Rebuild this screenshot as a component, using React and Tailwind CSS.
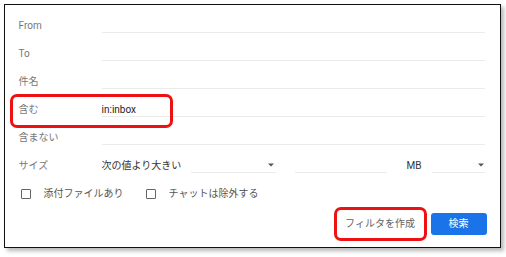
import React from "react";

const font = { fontFamily: 'Roboto, "Noto Sans CJK JP", "Noto Sans", sans-serif' };

function Arrow() {
  return (
    <svg width="6" height="4" viewBox="0 0 6 4" className="shrink-0">
      <path d="M0 0.5 L6 0.5 L3 3.5 Z" fill="#555" />
    </svg>
  );
}

function TextRow({ label, value, children }) {
  return (
    <div className="relative flex h-[28px] items-center">
      <div className="w-[83px] text-[10px] text-[#777]">{label}</div>
      <div className="flex h-[14px] flex-1 items-center border-b border-[#ebebeb] text-[10px] text-[#222]">
        {value}
      </div>
      {children}
    </div>
  );
}

function Checkbox({ label }) {
  return (
    <div className="flex items-center">
      <div className="h-[10px] w-[10px] rounded-[1px] border-[1.5px] border-[#666]" />
      <span className="ml-[13px] text-[10px] text-[#555]">{label}</span>
    </div>
  );
}

export default function App() {
  return (
    <div className="h-[257px] w-[506px] bg-white pl-[4px] pt-[4px]" style={font}>
      <div className="box-border h-[244px] w-[497px] border-[1.5px] border-[#111] bg-white pl-[13.5px] pr-[15.5px] pt-[6.5px] shadow-[3px_3px_4px_rgba(0,0,0,0.28)]">
        <TextRow label="From" />
        <TextRow label="To" />
        <TextRow label="件名" />
        <TextRow label="含む" value="in:inbox">
          <div className="pointer-events-none absolute left-[-9px] top-[-2px] h-[34px] w-[163px] rounded-[7px] border-[3px] border-[#ee1111]" />
        </TextRow>
        <TextRow label="含まない" />
        <div className="flex h-[28px] items-center">
          <div className="w-[83px] text-[10px] text-[#777]">サイズ</div>
          <div className="flex w-[174px] items-center">
            <span className="text-[10px] text-[#333]">次の値より大きい</span>
            <div className="ml-[10px] flex h-[14px] flex-1 items-center justify-end border-b border-[#ebebeb] pr-[2px]">
              <Arrow />
            </div>
          </div>
          <div className="ml-[19px] h-[14px] w-[92px] border-b border-[#ebebeb]" />
          <span className="ml-[20px] text-[10px] text-[#333]">MB</span>
          <div className="ml-[11px] flex h-[14px] flex-1 items-center justify-end border-b border-[#ebebeb] pr-[1px]">
            <Arrow />
          </div>
        </div>
        <div className="flex h-[28px] items-center pl-[2px]">
          <Checkbox label="添付ファイルあり" />
          <div className="ml-[22px]">
            <Checkbox label="チャットは除外する" />
          </div>
        </div>
        <div className="mr-[-2px] mt-[3px] flex h-[26px] items-center justify-end">
          <div className="relative flex h-[26px] w-[85px] items-center justify-center text-[10px] text-[#5f6368]">
            フィルタを作成
            <div className="pointer-events-none absolute -inset-[4px] rounded-[7px] border-[3px] border-[#ee1111]" />
          </div>
          <div className="ml-[8px] flex h-[22px] w-[56px] items-center justify-center rounded-[3px] bg-[#1a73e8] text-[10px] text-white">
            検索
          </div>
        </div>
      </div>
    </div>
  );
}
